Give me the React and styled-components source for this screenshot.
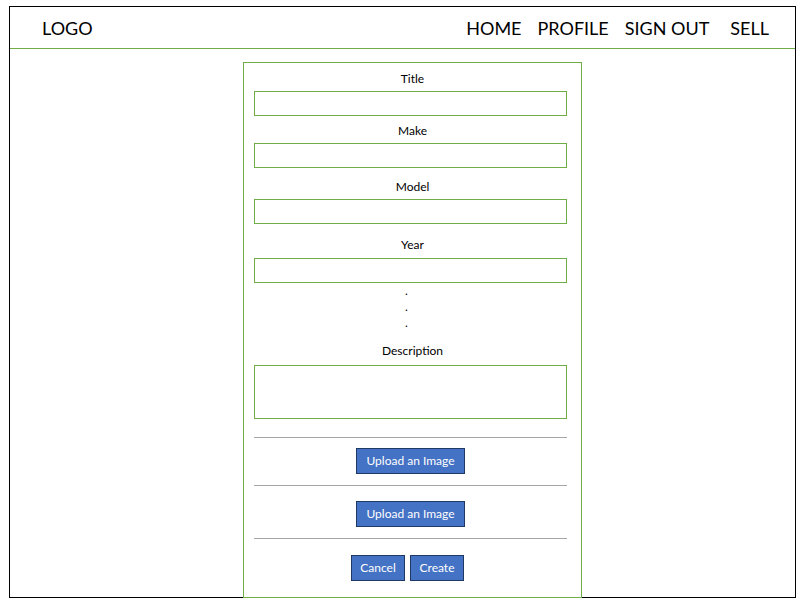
import React from "react";
import styled, { createGlobalStyle } from "styled-components";

const Global = createGlobalStyle`
  * { box-sizing: border-box; }
  html, body { margin: 0; padding: 0; background: #fff; }
  body { font-family: Lato, "Open Sans", sans-serif; color: #000; }
`;

const Frame = styled.div`
  margin: 6px 0 0 9px;
  width: 787px;
  height: 592px;
  border: 1px solid #000;
  display: flex;
  flex-direction: column;
`;

const Header = styled.header`
  height: 42px;
  flex: none;
  border-bottom: 1px solid #70ad47;
  display: flex;
  align-items: center;
  justify-content: space-between;
  padding: 0 26px 0 32px;
  font-size: 18px;
`;

const Logo = styled.div``;

const Nav = styled.nav`
  display: flex;
  align-items: center;
`;

const NavItem = styled.span`
  margin-left: ${(p) => p.$gap || 16}px;
`;

const Main = styled.main`
  flex: 1;
  display: flex;
  align-items: flex-start;
`;

const Form = styled.form`
  margin: 13px 0 -1px 233px;
  width: 339px;
  height: 536px;
  border: 1px solid #70ad47;
  background: #fff;
  padding: 8px 14px 0 10px;
  display: flex;
  flex-direction: column;
`;

const Label = styled.label`
  display: block;
  height: 16px;
  line-height: 16px;
  font-size: 12px;
  text-align: center;
  margin-top: ${(p) => p.$top || 0}px;
  padding-left: 4px;
`;

const Field = styled.div`
  width: 313px;
  height: ${(p) => p.$h || 25}px;
  border: 1px solid #70ad47;
  margin-top: ${(p) => p.$top || 5}px;
`;

const Dots = styled.div`
  font-size: 12px;
  line-height: 16px;
  text-align: center;
  padding-right: 8px;
`;

const Divider = styled.hr`
  width: 313px;
  height: 0;
  border: none;
  border-top: 1px solid #a6a6a6;
  margin: ${(p) => p.$top || 0}px 0 0 0;
`;

const ButtonRow = styled.div`
  width: 313px;
  display: flex;
  justify-content: center;
  gap: 5px;
  margin-top: ${(p) => p.$top || 0}px;
  padding-right: ${(p) => p.$shift || 0}px;
`;

const Button = styled.button`
  width: ${(p) => p.$w}px;
  height: 26px;
  padding: 0;
  border: 1px solid #203864;
  background: #4472c4;
  color: #fff;
  font-family: Lato, "Open Sans", sans-serif;
  font-size: 12px;
  line-height: 24px;
  text-align: center;
`;

export default function App() {
  return (
    <>
      <Global />
      <Frame>
        <Header>
          <Logo>LOGO</Logo>
          <Nav>
            <NavItem $gap={0}>HOME</NavItem>
            <NavItem $gap={16}>PROFILE</NavItem>
            <NavItem $gap={16}>SIGN OUT</NavItem>
            <NavItem $gap={21}>SELL</NavItem>
          </Nav>
        </Header>
        <Main>
          <Form onSubmit={(e) => e.preventDefault()}>
            <Label>Title</Label>
            <Field $top={4} />
            <Label $top={7}>Make</Label>
            <Field $top={4} />
            <Label $top={11}>Model</Label>
            <Field $top={4} />
            <Label $top={13}>Year</Label>
            <Field $top={5} />
            <Dots>
              .<br />.<br />.
            </Dots>
            <Label $top={12}>Description</Label>
            <Field $top={6} $h={54} />
            <Divider $top={18} />
            <ButtonRow $top={10}>
              <Button type="button" $w={109}>Upload an Image</Button>
            </ButtonRow>
            <Divider $top={11} />
            <ButtonRow $top={15}>
              <Button type="button" $w={109}>Upload an Image</Button>
            </ButtonRow>
            <Divider $top={11} />
            <ButtonRow $top={16} $shift={6}>
              <Button type="button" $w={54}>Cancel</Button>
              <Button type="button" $w={54}>Create</Button>
            </ButtonRow>
          </Form>
        </Main>
      </Frame>
    </>
  );
}
